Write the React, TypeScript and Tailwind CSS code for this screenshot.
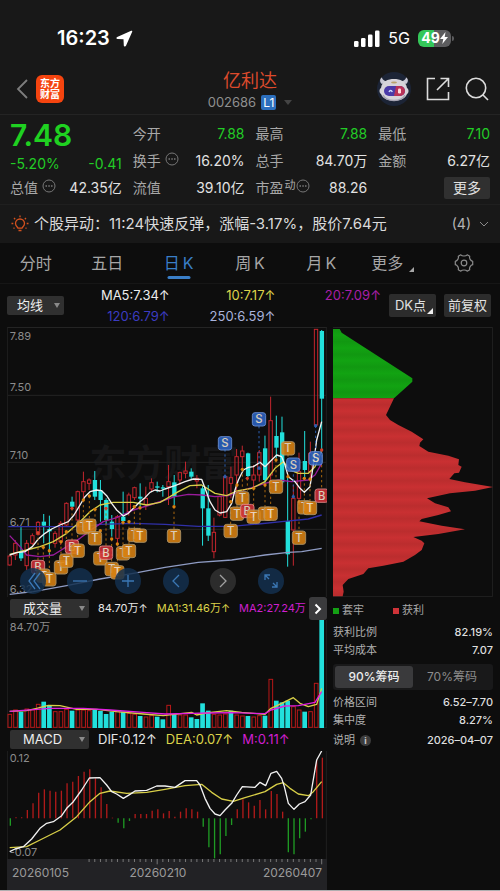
import React from "react";

const FONT = "font-['Inter','Noto_Sans_CJK_SC',sans-serif]";

/* Chart space: three units per pixel, one trading day every 17 units. */
const dayX = (i: number) => 29 + 17.02 * i;
const RED = "#c4262e";
const CYAN = "#22e0dc";

type Candle = [string, number, number, number, number]; // colour, high, body top, body bottom, low
const candles: Candle[] = [
  ["r", 690, 693, 720, 722], ["r", 645, 655, 690, 705], ["c", 605, 678, 700, 708], ["r", 645, 655, 722, 735],
  ["r", 625, 632, 655, 660], ["r", 588, 592, 628, 632], ["c", 567, 590, 602, 655], ["c", 572, 612, 619, 690],
  ["r", 618, 625, 655, 668], ["r", 588, 595, 650, 660], ["r", 532, 535, 600, 603], ["c", 515, 530, 545, 552],
  ["r", 497, 500, 585, 588], ["r", 440, 470, 500, 520], ["r", 460, 465, 475, 495], ["c", 438, 465, 515, 525],
  ["c", 465, 497, 525, 590], ["c", 520, 525, 585, 597], ["c", 570, 590, 612, 635], ["r", 570, 575, 640, 655],
  ["c", 500, 575, 588, 595], ["r", 503, 510, 560, 572], ["r", 485, 488, 518, 525], ["c", 475, 515, 521, 545],
  ["r", 485, 520, 538, 555], ["r", 460, 473, 492, 498], ["c", 470, 484, 488, 502], ["c", 480, 487, 491, 515],
  ["r", 420, 470, 485, 540], ["c", 450, 472, 515, 540], ["r", 440, 443, 465, 480], ["r", 410, 438, 445, 460],
  ["c", 430, 440, 455, 465], ["r", 450, 460, 468, 490], ["c", 480, 490, 550, 662], ["c", 480, 550, 632, 648],
  ["r", 578, 622, 680, 700], ["r", 512, 515, 570, 574], ["r", 452, 455, 577, 579], ["r", 425, 458, 475, 520],
  ["r", 372, 395, 450, 500], ["r", 362, 378, 395, 430], ["c", 383, 385, 453, 456], ["r", 420, 450, 465, 490],
  ["r", 375, 383, 450, 470], ["c", 332, 370, 465, 478], ["r", 215, 287, 450, 470], ["c", 272, 333, 368, 400],
  ["c", 275, 322, 472, 478], ["c", 455, 588, 688, 725], ["r", 480, 520, 615, 722], ["r", 383, 440, 520, 540],
  ["c", 318, 408, 435, 460], ["r", 350, 385, 440, 470], ["r", 12, 13, 300, 302], ["c", 15, 18, 221, 375],
];

const volumes: [string, number][] = [
  ["r", 358], ["r", 345], ["c", 350], ["r", 342], ["r", 345], ["r", 328], ["c", 320], ["c", 330],
  ["r", 350], ["r", 350], ["r", 343], ["c", 347], ["r", 345], ["r", 345], ["r", 347], ["c", 343],
  ["c", 348], ["c", 357], ["c", 350], ["r", 350], ["c", 350], ["r", 355], ["r", 358], ["c", 363],
  ["r", 366], ["r", 362], ["c", 365], ["c", 373], ["r", 331], ["c", 358], ["r", 360], ["r", 360],
  ["c", 367], ["c", 372], ["c", 325], ["c", 347], ["r", 358], ["r", 360], ["r", 357], ["c", 347],
  ["r", 360], ["r", 363], ["c", 363], ["r", 366], ["r", 362], ["c", 362], ["r", 253], ["c", 317],
  ["c", 322], ["c", 317], ["r", 335], ["r", 345], ["c", 350], ["r", 350], ["r", 265], ["c", 75],
];

const macd = [
  692, 667, 667, 645, 625, 593, 583, 587, 590, 587, 565, 560, 543, 530, 523, 550, 577, 627, 668, 683, 700, 678,
  657, 657, 657, 647, 643, 655, 648, 665, 650, 640, 643, 650, 695, 757, 790, 778, 723, 690, 643, 613, 622, 632,
  615, 643, 588, 597, 650, 772, 778, 730, 710, 673, 495, 488,
];

/* letter, x, y, y of the day it belongs to */
type Mark = [string, number, number, number];
const marks: Mark[] = [
  ["T", 250, 607, 525], ["T", 268, 602, 513], ["T", 285, 640, 553], ["B", 114, 726, 623], ["T", 130, 752, 667],
  ["T", 148, 763, 677], ["T", 183, 727, 650], ["T", 199, 707, 620], ["B", 216, 665, 550], ["T", 233, 677, 600],
  ["T", 301, 700, 617], ["B", 318, 683, 550], ["T", 335, 732, 642], ["T", 352, 742, 657], ["T", 369, 685, 592],
  ["T", 387, 678, 590], ["T", 403, 630, 545], ["T", 420, 632, 548], ["T", 522, 633, 545], ["T", 692, 618, 530],
  ["T", 727, 520, 433], ["T", 711, 566, 480], ["B", 742, 558, 460], ["T", 761, 575, 490], ["T", 795, 566, 480],
  ["T", 812, 566, 470], ["T", 828, 485, 405], ["T", 864, 370, 455], ["T", 897, 638, 530], ["T", 913, 547, 460],
  ["T", 930, 549, 462], ["S", 675, 355, 455], ["S", 777, 283, 430], ["S", 880, 419, 515], ["S", 947, 400, 302],
  ["B", 965, 512, 375],
];
const markFill: Record<string, string> = { T: "#d98212", B: "#cf3038", S: "#2c63c4" };
const markEdge: Record<string, string> = { T: "#b99a68", B: "#e88a8a", S: "#6b95df" };
const markDot: Record<string, string> = { T: "#d98212", B: "#d5402c", S: "#2c5fb0" };

const ma5 =
  "29,690 50,683 75,680 97,665 115,642 135,625 155,612 180,600 205,590 222,570 240,540 255,515 270,500 290,495 305,497 320,512 335,535 350,555 370,573 385,565 405,545 420,530 435,518 450,502 465,495 480,498 495,492 525,482 555,470 580,462 605,463 617,495 630,530 645,555 660,564 680,560 695,535 705,495 715,465 730,435 745,427 760,425 780,412 795,425 815,405 830,390 845,395 855,420 865,455 885,470 900,490 913,502 930,485 940,420 950,345 965,290";
const ma10 =
  "29,688 80,675 120,665 160,650 200,625 240,590 270,560 300,540 340,532 400,532 440,540 480,532 510,515 535,500 570,482 605,480 645,505 680,512 710,498 755,490 795,470 825,430 850,410 870,435 895,445 925,445 945,425 965,378";
const ma20 =
  "29,632 60,665 80,690 120,695 160,690 200,665 240,640 280,610 310,590 350,578 400,555 450,540 495,525 525,515 565,508 605,510 645,515 685,512 725,497 755,488 795,475 835,465 875,470 925,465 945,450 965,415";
const ma120 = "25,605 250,605 300,598 400,595 495,598 595,604 695,604 775,597 845,590 925,582 965,570";
const ma250 = "29,808 100,800 200,782 300,762 400,745 495,727 595,712 695,705 795,690 865,682 905,680 965,670";
const volMa1 =
  "29,349 80,347 110,340 145,331 180,332 230,343 290,343 350,350 430,357 490,362 575,352 590,360 625,353 680,347 725,352 795,358 813,340 845,325 880,308 900,325 925,335 950,328 965,280";
const volMa2 =
  "29,349 100,344 150,340 250,340 330,345 430,352 495,357 575,355 625,354 695,353 795,356 813,345 855,333 895,332 945,322 965,290";
const dif =
  "29,770 45,762 70,755 95,732 120,700 140,685 160,680 185,662 200,640 220,620 245,585 268,549 300,548 320,570 335,590 350,597 370,610 390,598 405,588 440,586 470,573 495,573 525,577 555,557 590,557 600,570 615,610 630,640 645,657 660,662 675,645 695,625 710,600 727,575 765,577 780,562 797,572 813,535 830,529 845,550 853,575 865,625 882,643 898,627 915,620 932,600 950,495 965,468";
const dea =
  "29,758 80,755 120,735 180,705 230,665 270,620 300,595 330,588 380,595 440,592 495,583 555,572 605,568 635,592 665,612 700,619 735,608 795,590 830,568 850,563 870,580 895,597 925,602 940,590 965,560";

function Line({ points, color }: { points: string; color: string }) {
  return <polyline points={points} fill="none" stroke={color} strokeWidth="4" strokeLinejoin="round" />;
}

function AxisText({ y, children }: { y: number; children: string }) {
  return (
    <text x={29} y={y} fontSize="33" fill="#8b8b8b">
      {children}
    </text>
  );
}

function PriceChart() {
  return (
    <svg viewBox="21 6 960 810" className="block w-full" role="img" aria-label="日K线图">
      <text x="268" y="455" fontSize="112" fontWeight="700" fill="#171718">
        东方财富
      </text>
      <path d="M21 7.500H981M24 211H978M24 412H978M24 613H978" stroke="#242424" strokeWidth="3" />
      <path d="M22 6V816M979 6V816" stroke="#202020" strokeWidth="3" />
      <AxisText y={45}>7.89</AxisText>
      <AxisText y={199}>7.50</AxisText>
      <AxisText y={401}>7.10</AxisText>
      <AxisText y={604}>6.71</AxisText>
      <AxisText y={805}>6.32</AxisText>
      {candles.map(([kind, high, top, bottom, low], i) => {
        const x = dayX(i);
        return kind === "c" ? (
          <g key={i}>
            <path d={`M${x} ${high}V${low}`} stroke={CYAN} strokeWidth="3" />
            <rect x={x - 6} y={top} width="13" height={bottom - top} fill={CYAN} />
          </g>
        ) : (
          <g key={i} stroke={RED} strokeWidth="3" fill="none">
            <path d={`M${x} ${high}V${top}M${x} ${bottom}V${low}`} />
            <rect x={x - 5} y={top} width="10" height={bottom - top} />
          </g>
        );
      })}
      <Line points={ma120} color="#3030a8" />
      <Line points={ma250} color="#8f9cc4" />
      <Line points={ma20} color="#9a1c9c" />
      <Line points={ma10} color="#d8cf48" />
      <Line points={ma5} color="#f2f2f2" />
      {marks.map(([letter, x, y, from], i) => (
        <g key={i}>
          <path
            d={`M${x} ${from}V${y}`}
            stroke={letter === "S" ? "#2c5fb0" : "#a8660f"}
            strokeWidth="3"
            strokeDasharray="7 8"
          />
          <circle cx={x} cy={from} r="5" fill={markDot[letter]} />
        </g>
      ))}
      {marks.map(([letter, x, y], i) => (
        <g key={i} opacity="0.88">
          <rect x={x - 20} y={y - 20} width="40" height="40" rx="8" fill={markFill[letter]} stroke={markEdge[letter]} strokeWidth="3" />
          <text x={x} y={y + 12} fontSize="34" fontWeight="500" textAnchor="middle" fill="#f3e6d2">
            {letter}
          </text>
        </g>
      ))}
    </svg>
  );
}

function VolumeChart() {
  return (
    <svg viewBox="21 75 960 324" className="block w-full" role="img" aria-label="成交量">
      <path d="M22 75V399M979 75V399M21 398H981" stroke="#202020" strokeWidth="3" />
      <AxisText y={108}>84.70万</AxisText>
      {volumes.map(([kind, top], i) =>
        kind === "c" ? (
          <rect key={i} x={dayX(i) - 7} y={top} width="14" height={399 - top} fill={CYAN} />
        ) : (
          <rect key={i} x={dayX(i) - 5} y={top} width="11" height={397 - top} fill="none" stroke="#b81818" strokeWidth="3" />
        ),
      )}
      <Line points={volMa1} color="#d8cf48" />
      <Line points={volMa2} color="#e01fe0" />
    </svg>
  );
}

function MacdChart() {
  return (
    <svg viewBox="21 468 960 324" className="block w-full" role="img" aria-label="MACD">
      <path d="M22 468V792M979 468V792" stroke="#202020" strokeWidth="3" />
      <AxisText y={501}>0.12</AxisText>
      <AxisText y={784}>-0.07</AxisText>
      {macd.map((end, i) => (
        <path key={i} d={`M${dayX(i) + 2} 670V${end}`} stroke={end > 670 ? "#1f9a24" : "#b01a1a"} strokeWidth="4" />
      ))}
      <Line points={dea} color="#d8cf48" />
      <Line points={dif} color="#f2f2f2" />
    </svg>
  );
}

function ChipChart() {
  return (
    <svg viewBox="24 21 480 810" className="block w-full" role="img" aria-label="筹码分布">
      <defs>
        <linearGradient id="loss" gradientUnits="userSpaceOnUse" x1="0" y1="27" x2="0" y2="46" spreadMethod="reflect">
          <stop offset="0" stopColor="#119811" />
          <stop offset="1" stopColor="#12a312" />
        </linearGradient>
        <linearGradient id="gain" gradientUnits="userSpaceOnUse" x1="0" y1="235" x2="0" y2="254" spreadMethod="reflect">
          <stop offset="0" stopColor="#c93032" />
          <stop offset="1" stopColor="#bb2d2e" />
        </linearGradient>
      </defs>
      <path d="M24 22.500H503V830H24" fill="none" stroke="#222" strokeWidth="3" />
      <polygon fill="url(#loss)" points="24,27 44,27 50,38 262,175 262,185 207,235 24,235" />
      <polygon
        fill="url(#gain)"
        points="24,235 207,235 183,285 195,300 220,315 260,335 295,358 285,368 283,378 310,395 370,407 402,418 400,435 410,440 402,458 388,460 373,477 420,487 504,501 450,512 375,520 306,535 330,550 370,562 378,574 340,585 290,597 283,604 350,617 420,628 340,642 265,651 290,662 298,670 290,690 270,705 235,725 175,737 130,745 115,762 70,777 53,795 56,815 53,829 24,829"
      />
    </svg>
  );
}

function Dots() {
  return (
    <svg viewBox="0 0 14 14" className="mb-1 size-3.5 shrink-0" fill="none" stroke="#777" aria-hidden="true">
      <circle cx="7" cy="7" r="6" />
      <path d="M3.500 7h1.500M6.300 7h1.500M9 7h1.500" strokeWidth="1.300" />
    </svg>
  );
}

function Stat({ label, value, sup, dots, green }: { label: string; value: string; sup?: string; dots?: boolean; green?: boolean }) {
  return (
    <div className="flex h-[27px] items-center justify-between">
      <dt className="flex items-center text-[#a8a8a8]">
        {label}
        {sup && <span className="mb-1.5 ml-px text-[11px] leading-4">{sup}</span>}
        {dots && (
          <span className={sup ? "" : "ml-1"}>
            <Dots />
          </span>
        )}
      </dt>
      <dd className={green ? "text-[#22cc26]" : "text-[#e2e2e2]"}>{value}</dd>
    </div>
  );
}

function PanelSelect({ label, options, className }: { label: string; options: string[]; className: string }) {
  return (
    <div className={`relative shrink-0 ${className}`}>
      <select
        aria-label={label}
        className="block h-[19px] w-full appearance-none rounded-[2px] bg-[#303030] pr-4 text-[13px] leading-[19px] text-[#ededed]"
      >
        {options.map((o) => (
          <option key={o}>{o}</option>
        ))}
      </select>
      <svg viewBox="0 0 6 5" className="pointer-events-none absolute top-[7px] right-1 h-[5px] w-1.5" aria-hidden="true">
        <path d="M0 0h6L3 5z" fill="#8a8a8a" />
      </svg>
    </div>
  );
}

const navIcons = [
  { name: "最早", d: "M15 5 9 13l6 8M20 5l-6 8 6 8" },
  { name: "缩小", d: "M6 13h14" },
  { name: "放大", d: "M7 13h12M13 7v12" },
  { name: "向左", d: "m16 7-6 6 6 6" },
  { name: "向右", d: "m10 7 6 6-6 6" },
  { name: "全屏", d: "M7 12V7h5M7 7l4 4M19 14v5h-5M19 19l-4-4" },
];

function ChipRow({ label, value }: { label: string; value: string }) {
  return (
    <div className="flex h-[18px] items-center justify-between">
      <dt className="text-[#b0b0b0]">{label}</dt>
      <dd className="font-medium text-[#dedede]">{value}</dd>
    </div>
  );
}

export default function App() {
  return (
    <main className={`min-h-screen bg-[#0d0d0d] text-sm text-[#e2e2e2] ${FONT}`}>
      <div className="bg-[#181818]">
        <div className="flex h-[60px] items-center justify-between pt-4 pr-[46px] pl-[57px] text-white">
          <div className="flex items-center gap-[6px]">
            <span className="text-xl font-semibold">16:23</span>
            <svg viewBox="0 0 17 17" className="size-[17px]" aria-hidden="true">
              <path d="M15.200.8 1.200 6.900c-1.200.5-.9 2 .3 2.100l6 .2.300 6.200c.1 1.200 1.700 1.500 2.200.3L16.200 1.800c.3-.7-.3-1.300-1-1z" fill="#fff" />
            </svg>
          </div>
          <div className="flex items-center">
            <svg viewBox="0 0 26 17" className="h-[17px] w-[26px]" fill="#fff" aria-hidden="true">
              <rect x="0" y="11" width="4.500" height="6" rx="1.300" />
              <rect x="7" y="8" width="4.500" height="9" rx="1.300" />
              <rect x="14" y="4.500" width="4.500" height="12.500" rx="1.300" />
              <rect x="21" y="0.500" width="4.500" height="16.500" rx="1.300" />
            </svg>
            <span className="ml-2 text-base">5G</span>
            <span className="ml-2 flex h-[17px] w-[33px] items-center justify-center rounded-[6px] bg-[linear-gradient(90deg,#34c759_50%,#5c5c5e_50%)] text-sm font-bold">
              49
              <svg viewBox="0 0 8 12" className="h-3 w-2" fill="#fff" aria-hidden="true">
                <path d="M5.500 0 0 7h3.300L2.300 12 8 5H4.700z" />
              </svg>
            </span>
            <span className="ml-px h-[5px] w-[2px] rounded-r bg-[#5c5c5e]" />
          </div>
        </div>

        <header className="grid h-[55px] grid-cols-[1fr_auto_1fr] items-center border-b border-[#242424] px-[11px] pt-1">
          <div className="flex items-center gap-2 pl-[5px]">
            <button aria-label="返回">
              <svg viewBox="0 0 12 20" className="h-5 w-3" fill="none" stroke="#7d7d7d" strokeWidth="1.800">
                <path d="M11 1 2 10l9 9" />
              </svg>
            </button>
            <div className="flex size-7 flex-col items-center justify-center rounded-[6px] bg-[#f5440f] text-[10px] leading-[11px] font-bold text-white">
              <span>东方</span>
              <span>财富</span>
            </div>
          </div>
          <div className="flex flex-col items-center pt-[3px]">
            <h1 className="text-lg leading-6 text-[#dc4a2c]">亿利达</h1>
            <div className="flex h-5 items-center text-[13px] text-[#8f8f8f]">
              002686
              <span className="ml-[5px] rounded-[2px] bg-[#2c6fbd] px-0.5 text-xs leading-[15px] text-white">L1</span>
              <svg viewBox="0 0 8 5" className="ml-2 h-[5px] w-2" aria-hidden="true">
                <path d="M0 0h8L4 5z" fill="#444" />
              </svg>
            </div>
          </div>
          <div className="flex items-center justify-end gap-[15px]">
            <button aria-label="智能助手">
              <svg viewBox="0 0 34 34" className="size-[34px]">
                <circle cx="17" cy="17" r="17" fill="#1c2436" />
                <path d="M5 12C2 10 3 6 5 5.500c.5 3 3 3 5 4.500zM29 12c3-2 2-6 0-6.500-.5 3-3 3-5 4.500z" fill="#c9c9d6" />
                <path d="M4 16C5 9 11 7 17 7s12 2 13 9c2 1 2 5 0 6-2 5-7 6.500-13 6.500S6 27 4 22c-2-1-2-5 0-6z" fill="#d6d4da" />
                <path d="M6 23c2 4 6 5.500 11 5.500S26 27 28 23" stroke="#a5a3b2" strokeWidth="1.500" fill="none" />
                <rect x="7" y="14" width="21" height="10" rx="5" fill="#4a3aa8" />
                <path d="M19 14h4a5 5 0 0 1 0 10h-6z" fill="#b83258" />
                <path d="M12 20c.8-2 2.500-2 3.300 0" stroke="#cfe0ff" strokeWidth="1.300" fill="none" />
                <rect x="21" y="16.500" width="3" height="5" rx="1.200" fill="#ffd9dc" />
                <ellipse cx="17" cy="10.500" rx="3" ry="1" fill="#b9a26a" />
              </svg>
            </button>
            <button aria-label="分享">
              <svg viewBox="0 0 24 24" className="size-6" fill="none" stroke="#dcdcdc" strokeWidth="1.600">
                <path d="M9 1.500H1.500v21h21V15M14.500 1.500h8V10M22.500 1.500 11 13" />
              </svg>
            </button>
            <button aria-label="搜索">
              <svg viewBox="0 0 24 24" className="size-6" fill="none" stroke="#dcdcdc" strokeWidth="1.600">
                <circle cx="11" cy="11" r="9.700" />
                <path d="m18 18 5 5" />
              </svg>
            </button>
          </div>
        </header>

        <section className="grid grid-cols-4 gap-[11px] border-b border-[#1f1f1f] px-[10px] pt-[5px] pb-[3px]">
          <div>
            <div className="text-3xl leading-[30px] font-semibold text-[#1fd121]">7.48</div>
            <div className="flex h-[27px] items-center justify-between text-[#22cc26]">
              <span>-5.20%</span>
              <span>-0.41</span>
            </div>
            <dl className="-mt-[3px]">
              <Stat label="总值" value="42.35亿" dots />
            </dl>
          </div>
          <dl>
            <Stat label="今开" value="7.88" green />
            <Stat label="换手" value="16.20%" dots />
            <Stat label="流值" value="39.10亿" />
          </dl>
          <dl>
            <Stat label="最高" value="7.88" green />
            <Stat label="总手" value="84.70万" />
            <Stat label="市盈" value="88.26" sup="动" dots />
          </dl>
          <div>
            <dl>
              <Stat label="最低" value="7.10" green />
              <Stat label="金额" value="6.27亿" />
            </dl>
            <div className="flex h-[27px] items-center justify-end">
              <button className="h-[22px] w-[46px] rounded-[2px] bg-[#303030] leading-[22px]">更多</button>
            </div>
          </div>
        </section>

        <section className="flex h-[38px] items-center px-[11px]">
          <svg viewBox="0 0 18 18" className="size-[18px] shrink-0" fill="none" stroke="#d4521f" strokeWidth="1.300" aria-hidden="true">
            <path d="M7 13.200c0-1-2.500-2-2.500-4.700a4.500 4.500 0 0 1 9 0c0 2.700-2.500 3.700-2.500 4.700zM7.500 15.500h3" />
            <path d="M9 .5v1.800M3 3l1.200 1.200M15 3l-1.200 1.200M.5 8.500h1.800M15.700 8.500h1.800M2.500 13.500l1-.8M15.500 13.500l-1-.8" />
          </svg>
          <p className="ml-[5px] flex-1 truncate text-[15px] text-[#dadada]">个股异动：11:24快速反弹，涨幅-3.17%，股价7.64元</p>
          <button className="flex items-center gap-2 text-[#b5b5b5]" aria-label="展开">
            (4)
            <svg viewBox="0 0 10 6" className="h-1.5 w-[10px]" fill="none" stroke="#8a8a8a">
              <path d="m1 1 4 4 4-4" />
            </svg>
          </button>
        </section>
      </div>

      <nav className="grid h-[41px] grid-cols-7 border-b border-[#161616] text-base text-[#a6a6a6]">
        {["分时", "五日", "日\u2009K", "周\u2009K", "月\u2009K"].map((t, i) => (
          <button key={t} className={i === 2 ? "relative text-[#3a7fc8]" : ""}>
            {t}
            {i === 2 && <span className="absolute bottom-1 left-1/2 h-[3px] w-[23px] -translate-x-1/2 rounded bg-[#3a7fc8]" />}
          </button>
        ))}
        <button className="flex items-center justify-center gap-1.5">
          更多
          <svg viewBox="0 0 5 5" className="mt-3 size-[5px]" aria-hidden="true">
            <path d="M5 0v5H0z" fill="#a6a6a6" />
          </svg>
        </button>
        <button className="flex items-center justify-center" aria-label="设置">
          <svg viewBox="0 0 20 20" className="size-5" fill="none" stroke="#8c8c8c" strokeWidth="1.200" strokeLinejoin="round">
            <path d="M6.800 1.800c1.300 1.600 5.100 1.600 6.400 0l2.500 1.500c-.7 2 .9 4.600 3 5v3.400c-2.100.4-3.700 3-3 5l-2.500 1.500c-1.300-1.600-5.100-1.600-6.400 0l-2.500-1.500c.7-2-.9-4.600-3-5V8.300c2.100-.4 3.700-3 3-5z" />
            <circle cx="10" cy="10" r="2.800" />
          </svg>
        </button>
      </nav>

      <section className="flex h-[43px] items-center pr-[9px] pl-[7px]">
        <PanelSelect label="指标" options={["均线", "布林"]} className="w-[57px] [&>select]:pl-[10px]" />
        <div className="grid flex-1 grid-cols-3 text-right text-[13px] leading-[21px]">
          <span className="text-[#ececec]">MA5:7.34↑</span>
          <span className="text-[#dcd34a]">10:7.17↑</span>
          <span className="text-[#a81fa8]">20:7.09↑</span>
          <span className="text-[#3c3cc0]">120:6.79↑</span>
          <span className="text-[#a9b4dc]">250:6.59↑</span>
        </div>
        <button className="relative ml-2 h-[23px] w-[47px] rounded-[2px] bg-[#2c2c2c] pr-1 text-[13px]">
          DK点
          <svg viewBox="0 0 6 6" className="absolute right-[3px] bottom-[3px] size-1.5" aria-hidden="true">
            <path d="M6 0v6H0z" fill="#eee" />
          </svg>
        </button>
        <button className="ml-2 h-[23px] w-[47px] rounded-[2px] bg-[#2c2c2c] text-[13px]">前复权</button>
      </section>

      <div className="grid grid-cols-[2fr_1fr] gap-1.5 px-[7px]">
        <section className="min-w-0">
          <div className="relative">
            <PriceChart />
            <div className="absolute bottom-[3px] left-[4%] flex w-[82.5%] justify-between">
              {navIcons.map((n) => (
                <button
                  key={n.name}
                  aria-label={n.name}
                  className={`size-[26px] rounded-full ${n.name === "向右" ? "bg-[#303030]/90 text-[#a0a0a0]" : "bg-[#14304f]/85 text-[#3b78b5]"}`}
                >
                  <svg viewBox="0 0 26 26" className="size-[26px]" fill="none" stroke="currentColor" strokeWidth="1.300">
                    <path d={n.d} />
                  </svg>
                </button>
              ))}
            </div>
          </div>

          <div className="relative flex h-[23px] items-center overflow-hidden pl-[3px] text-[11px] whitespace-nowrap">
            <PanelSelect label="副图一" options={["成交量", "成交额"]} className="w-[79px] [&>select]:pl-[13px]" />
            <span className="ml-[9px] text-[#e6e6e6]">84.70万↑</span>
            <span className="ml-[9px] text-[#dcd34a]">MA1:31.46万↑</span>
            <span className="ml-[9px] text-[#d01fd0]">MA2:27.24万</span>
            <button aria-label="更多指标" className="absolute inset-y-0 right-0 flex w-[18px] items-center justify-center rounded-[3px] bg-[#3a3a3c]">
              <svg viewBox="0 0 8 12" className="h-3 w-2" fill="none" stroke="#fff" strokeWidth="2">
                <path d="m1.500 1.500 4.500 4.500-4.500 4.500" />
              </svg>
            </button>
          </div>
          <VolumeChart />

          <div className="flex h-[23px] items-center pl-[3px] text-[13px] whitespace-nowrap">
            <PanelSelect label="副图二" options={["MACD", "KDJ"]} className="w-[79px] [&>select]:pl-[13px]" />
            <span className="ml-[9px] text-[#e6e6e6]">DIF:0.12↑</span>
            <span className="ml-[9px] text-[#dcd34a]">DEA:0.07↑</span>
            <span className="ml-[9px] text-[#d01fd0]">M:0.11↑</span>
          </div>
          <MacdChart />

          <div className="h-[31px] bg-[#222225]">
            <svg viewBox="21 0 960 18" className="block w-full" aria-hidden="true">
              {candles.map((_, i) =>
                i > 13 ? <path key={i} d={`M${dayX(i)} 0V${i === 26 || i === 55 ? 16 : 9}`} stroke="#777" strokeWidth="3" /> : null,
              )}
            </svg>
            <div className="flex justify-between px-[5px] text-[12px] leading-4 text-[#9a9a9a]">
              <span>20260105</span>
              <span className="mr-4">20260210</span>
              <span>20260407</span>
            </div>
          </div>
        </section>

        <aside className="min-w-0 text-[11px]">
          <ChipChart />
          <div className="flex h-[27px] items-center text-[#a8a8a8]">
            <span className="mr-[3px] size-1.5 bg-[#14a014]" />
            套牢
            <span className="mr-[3px] ml-[29px] size-1.5 bg-[#cf3338]" />
            获利
          </div>
          <dl>
            <ChipRow label="获利比例" value="82.19%" />
            <ChipRow label="平均成本" value="7.07" />
          </dl>
          <div className="my-1 grid h-[26px] grid-cols-2 rounded-[3px] bg-[#19191a] p-0.5 text-xs">
            <button className="rounded-[3px] bg-[#3a3a3c] font-medium text-[#ececec]">90%筹码</button>
            <button className="text-[#8c8c8c]">70%筹码</button>
          </div>
          <dl>
            <ChipRow label="价格区间" value="6.52–7.70" />
            <ChipRow label="集中度" value="8.27%" />
            <div className="flex h-[22px] items-center justify-between">
              <dt className="flex items-center gap-[5px] text-[#b0b0b0]">
                说明
                <span className="flex size-[11px] items-center justify-center rounded-full bg-[#3c3c3c] text-[9px] font-bold text-[#ccc]">i</span>
              </dt>
              <dd className="font-medium text-[#dedede]">2026–04–07</dd>
            </div>
          </dl>
        </aside>
      </div>
      <div className="h-px bg-[#b0aeb0]" />
    </main>
  );
}
